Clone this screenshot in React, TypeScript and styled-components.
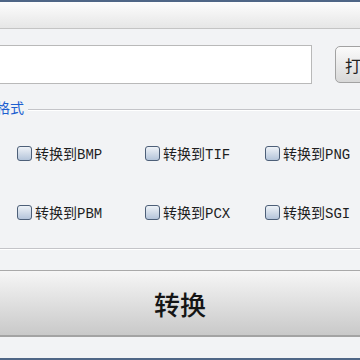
import styled, { createGlobalStyle } from 'styled-components'

const GlobalStyle = createGlobalStyle`
  html, body {
    margin: 0;
    padding: 0;
    width: 360px;
    height: 360px;
    overflow: hidden;
    background: #f2f3f5;
  }
  * { box-sizing: border-box; }
`

const formats = ['BMP', 'TIF', 'PNG', 'PBM', 'PCX', 'SGI']

const App = () => {
  return (
    <>
      <GlobalStyle />
      <Window>
        <Toolbar />
        <Body>
          <FileRow>
            <PathInput />
            <OpenButton>打开</OpenButton>
          </FileRow>
          <Group>
            <GroupHead>
              <GroupTitle>格式</GroupTitle>
              <GroupLine />
            </GroupHead>
            <Options>
              {formats.map((f) => (
                <Option key={f}>
                  <Box type='checkbox' />
                  <span>转换到{f}</span>
                </Option>
              ))}
            </Options>
          </Group>
          <Spacer />
          <ConvertButton>转换</ConvertButton>
        </Body>
      </Window>
    </>
  )
}

const Window = styled.div`
  width: 360px;
  height: 360px;
  display: flex;
  flex-direction: column;
  border-top: 2px solid #4f6686;
  border-bottom: 2px solid #4f6686;
  background: #f2f3f5;
  font-family: 'Noto Sans CJK SC', sans-serif;
`

const Toolbar = styled.div`
  height: 27px;
  flex: none;
  background: linear-gradient(#fdfdfd, #e6e6e6);
  border-bottom: 1px solid #c4c4c4;
`

const Body = styled.div`
  flex: 1;
  display: flex;
  flex-direction: column;
  padding-top: 16px;
`

const FileRow = styled.div`
  display: flex;
  align-items: center;
  gap: 13px;
  height: 39px;
`

const PathInput = styled.input`
  appearance: none;
  width: 322px;
  height: 39px;
  margin-left: -10px;
  margin-right: 10px;
  flex: none;
  border: 1px solid #b9b9b9;
  background-color: #ffffff;
  outline: none;
`

const OpenButton = styled.button`
  flex: none;
  width: 60px;
  height: 37px;
  padding: 0 0 0 9px;
  text-align: left;
  border: 1px solid #a2a2a2;
  border-radius: 5px;
  background: linear-gradient(#fbfbfb, #d8d8d8);
  font-family: 'Noto Sans CJK SC', sans-serif;
  font-size: 16px;
  color: #222;
`

const Group = styled.div`
  margin-top: 13px;
  height: 152px;
  border-bottom: 1px solid #c4c4c8;
  box-shadow: 0 1px 0 #fff;
`

const GroupHead = styled.div`
  display: flex;
  align-items: center;
  gap: 4px;
  height: 20px;
`

const GroupTitle = styled.span`
  margin-left: -4px;
  font-size: 14px;
  line-height: 20px;
  color: #1d5fd0;
`

const GroupLine = styled.div`
  flex: 1;
  border-top: 1px solid #c4c4c8;
  border-bottom: 1px solid #fff;
  margin-top: 6px;
`

const Options = styled.div`
  display: grid;
  grid-template-columns: 128px 120px 1fr;
  grid-auto-rows: 59px;
  padding: 28px 0 0 17px;
`

const Option = styled.label`
  display: flex;
  align-items: center;
  height: 16px;
  gap: 3px;
  font-family: 'Liberation Mono', 'Noto Sans CJK SC', monospace;
  font-size: 14px;
  color: #1e1e1e;
`

const Box = styled.input`
  appearance: none;
  margin: 0;
  width: 15px;
  height: 15px;
  flex: none;
  border: 1px solid #4d5f78;
  border-radius: 3px;
  background: linear-gradient(#eef2f7, #b4c4da);
`

const Spacer = styled.div`
  height: 21px;
  flex: none;
`

const ConvertButton = styled.button`
  height: 67px;
  width: 100%;
  flex: none;
  border: none;
  border-top: 1px solid #a9a9a9;
  border-bottom: 2px solid #a3a3a3;
  background: linear-gradient(#f6f6f6, #c9c9c9);
  font-family: 'Noto Sans CJK SC', sans-serif;
  font-size: 26px;
  font-weight: 500;
  color: #151515;
  padding: 0;
`

export default App
